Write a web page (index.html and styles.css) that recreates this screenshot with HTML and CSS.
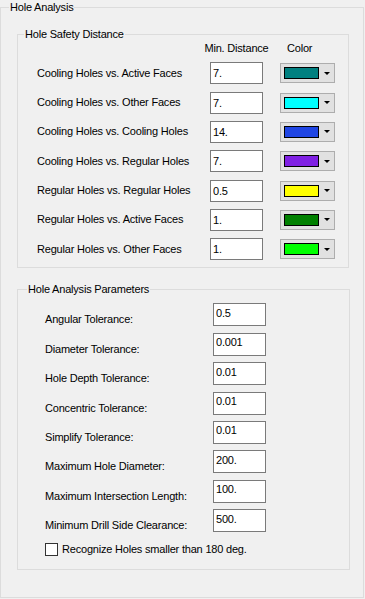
FILE: index.html
```html
<!DOCTYPE html>
<html lang="en">
<head>
    <meta charset="UTF-8">
    <meta name="viewport" content="width=device-width, initial-scale=1.0">
    <title>Hole Analysis</title>
    <link rel="stylesheet" href="styles.css">
</head>
<body>
    <fieldset class="panel">
        <legend>Hole Analysis</legend>

        <fieldset class="group safety">
            <legend>Hole Safety Distance</legend>
            <div class="safety-grid">
                <div></div>
                <div class="head">Min. Distance</div>
                <div class="head color-head">Color</div>

                <label>Cooling Holes vs. Active Faces</label>
                <input type="text" value="7.">
                <button class="color-btn"><span class="swatch" style="background:#008080"></span><span class="arrow"></span></button>

                <label>Cooling Holes vs. Other Faces</label>
                <input type="text" value="7.">
                <button class="color-btn"><span class="swatch" style="background:#00ffff"></span><span class="arrow"></span></button>

                <label>Cooling Holes vs. Cooling Holes</label>
                <input type="text" value="14.">
                <button class="color-btn"><span class="swatch" style="background:#1f45e4"></span><span class="arrow"></span></button>

                <label>Cooling Holes vs. Regular Holes</label>
                <input type="text" value="7.">
                <button class="color-btn"><span class="swatch" style="background:#7f20e3"></span><span class="arrow"></span></button>

                <label>Regular Holes vs. Regular Holes</label>
                <input type="text" value="0.5">
                <button class="color-btn"><span class="swatch" style="background:#ffff00"></span><span class="arrow"></span></button>

                <label>Regular Holes vs. Active Faces</label>
                <input type="text" value="1.">
                <button class="color-btn"><span class="swatch" style="background:#008000"></span><span class="arrow"></span></button>

                <label>Regular Holes vs. Other Faces</label>
                <input type="text" value="1.">
                <button class="color-btn"><span class="swatch" style="background:#00ff00"></span><span class="arrow"></span></button>
            </div>
        </fieldset>

        <fieldset class="group params">
            <legend>Hole Analysis Parameters</legend>
            <div class="params-grid">
                <label>Angular Tolerance:</label>
                <input type="text" value="0.5">

                <label>Diameter Tolerance:</label>
                <input type="text" value="0.001">

                <label>Hole Depth Tolerance:</label>
                <input type="text" value="0.01">

                <label>Concentric Tolerance:</label>
                <input type="text" value="0.01">

                <label>Simplify Tolerance:</label>
                <input type="text" value="0.01">

                <label>Maximum Hole Diameter:</label>
                <input type="text" value="200.">

                <label>Maximum Intersection Length:</label>
                <input type="text" value="100.">

                <label>Minimum Drill Side Clearance:</label>
                <input type="text" value="500.">
            </div>
            <div class="check-row">
                <span class="checkbox"></span>
                <span>Recognize Holes smaller than 180 deg.</span>
            </div>
        </fieldset>
    </fieldset>
</body>
</html>
```

FILE: styles.css
```css
body {
    margin: 0;
    background: #f0f0f0;
    font-family: "Liberation Sans", Arial, sans-serif;
    font-size: 11px;
    line-height: 13px;
    letter-spacing: -0.2px;
    color: #000;
}
fieldset {
    margin: 0;
    padding: 0;
    border: 1px solid #dcdcdc;
    box-sizing: border-box;
}
legend {
    padding: 0 1px;
    line-height: 14px;
}
.panel {
    width: 364px;
    height: 598px;
}
.panel > legend {
    margin-left: 8px;
}
.group {
    margin: 13px 14px 0 16px;
}
.safety > legend {
    margin-left: 6px;
}
.params {
    margin-top: 14px;
    margin-right: 13px;
}
.params > legend {
    margin-left: 9px;
}
input {
    font-family: inherit;
    font-size: 11px;
    line-height: 13px;
    letter-spacing: -0.2px;
    border: 1px solid #7a7a7a;
    background: #fff;
    color: #000;
    margin: 0;
    outline: none;
    border-radius: 0;
}
.safety-grid {
    display: grid;
    grid-template-columns: 173px 70px 55px;
    row-gap: 7.33px;
    align-items: center;
    padding: 0 0 7px 19px;
}
.safety-grid input {
    width: 53px;
    height: 22px;
    box-sizing: border-box;
    padding: 0 2px;
}
.head {
    height: 13px;
    margin-top: 1px;
}
.head:nth-child(2) {
    width: 53px;
    white-space: nowrap;
    display: flex;
    justify-content: center;
}
.color-head {
    padding-left: 7px;
}
.color-btn {
    width: 55px;
    height: 20px;
    box-sizing: border-box;
    border: 1px solid #adadad;
    background: #e1e1e1;
    padding: 0 0 0 3px;
    margin: 0;
    display: flex;
    align-items: center;
}
.swatch {
    width: 35px;
    height: 12px;
    box-sizing: border-box;
    border: 1px solid #000;
}
.arrow {
    margin-left: 5px;
    width: 0;
    height: 0;
    border-left: 3px solid transparent;
    border-right: 3px solid transparent;
    border-top: 3px solid #000;
}
.params-grid {
    display: grid;
    grid-template-columns: 168px 53px;
    row-gap: 6.43px;
    padding: 7px 0 0 27px;
}
.params-grid label {
    align-self: end;
}
.params-grid input {
    width: 53px;
    height: 23px;
    box-sizing: border-box;
    padding: 2px 2px 6px;
}
.check-row {
    display: flex;
    align-items: center;
    gap: 4px;
    padding: 11px 0 13px 27px;
}
.checkbox {
    width: 13px;
    height: 13px;
    box-sizing: border-box;
    border: 1px solid #333;
    background: #fff;
}
```
